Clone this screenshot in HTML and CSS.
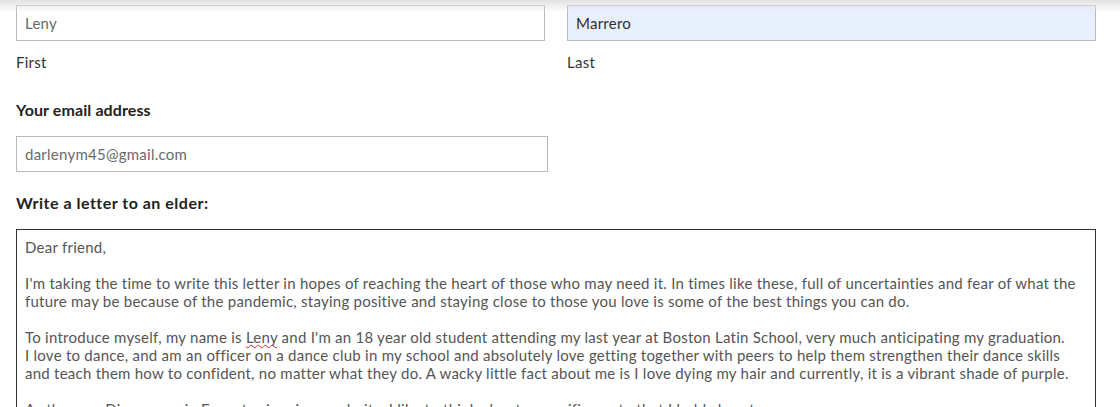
FILE: index.html
```html
<!DOCTYPE html>
<html lang="en">
<head>
<meta charset="utf-8">
<title>Letter to an elder</title>
<link rel="stylesheet" href="styles.css">
</head>
<body>
<div class="topshade"></div>
<form class="wrapper">
  <div class="name-row">
    <div class="field">
      <input type="text" class="box" name="first" value="Leny">
      <label class="sub">First</label>
    </div>
    <div class="field">
      <input type="text" class="box filled" name="last" value="Marrero">
      <label class="sub">Last</label>
    </div>
  </div>

  <p class="title">Your email address</p>
  <input type="text" class="box email" name="email" value="darlenym45@gmail.com">

  <p class="title letter-title">Write a letter to an elder:</p>
  <div class="letter">
    <p>Dear friend,</p>
    <p>I'm taking the time to write this letter in hopes of reaching the heart of those who may need it. In times like these, full of uncertainties and fear of what the<br>future may be because of the pandemic, staying positive and staying close to those you love is some of the best things you can do.</p>
    <p>To introduce myself, my name is <span class="typo">Leny</span> and I'm an 18 year old student attending my last year at Boston Latin School, very much anticipating my graduation.<br>I love to dance, and am an officer on a dance club in my school and absolutely love getting together with peers to help them strengthen their dance skills<br>and teach them how to confident, no matter what they do. A wacky little fact about me is I love dying my hair and currently, it is a vibrant shade of purple.</p>
    <p>As the new Disney movie Encanto rises in popularity, I like to think about a specific quote that I hold close to me.</p>
  </div>
</form>
</body>
</html>
```

FILE: styles.css
```css
body { margin: 0; background-color: #FFFFFF; font-family: "Lato", "Open Sans", Arial, sans-serif; font-size: 15px; letter-spacing: 0.25px; color: #333333; overflow: hidden; }
.topshade { position: fixed; top: 0; left: 0; right: 0; height: 12px; background: linear-gradient(#E2E2E2, rgba(255,255,255,0)); pointer-events: none; }
.wrapper { width: 1080px; margin: 0 0 0 16px; padding-top: 5px; }
.name-row { display: grid; grid-template-columns: 529px 529px; column-gap: 22px; }
.field { display: flex; flex-direction: column; }
.box { box-sizing: border-box; height: 36px; margin: 0; padding: 0 8px; border: solid 1px #B9B9B9; background-color: #FFFFFF; font-family: inherit; font-size: 15px; letter-spacing: 0.25px; color: #6A6A6A; outline: none; }
.box.filled { background-color: #E8F0FE; color: #2E2E2E; }
.box.email { width: 532px; }
.sub { display: block; margin-top: 12px; line-height: 18px; color: #333333; }
.title { margin: 29px 0 0 0; line-height: 20px; font-size: 16px; font-weight: 700; letter-spacing: 0.1px; color: #222222; }
.email { margin-top: 16px; }
.letter-title { margin-top: 21px; letter-spacing: 0.5px; }
.letter { margin-top: 16px; border: solid 1px #2A2F33; padding: 8px 8px 0 8px; height: 200px; color: #555555; line-height: 18px; white-space: nowrap; }
.letter p { margin: 0 0 18px 0; }
.typo { text-decoration: underline wavy #E02020; text-decoration-thickness: 1px; text-underline-offset: 1px; text-decoration-skip-ink: none; }
```
